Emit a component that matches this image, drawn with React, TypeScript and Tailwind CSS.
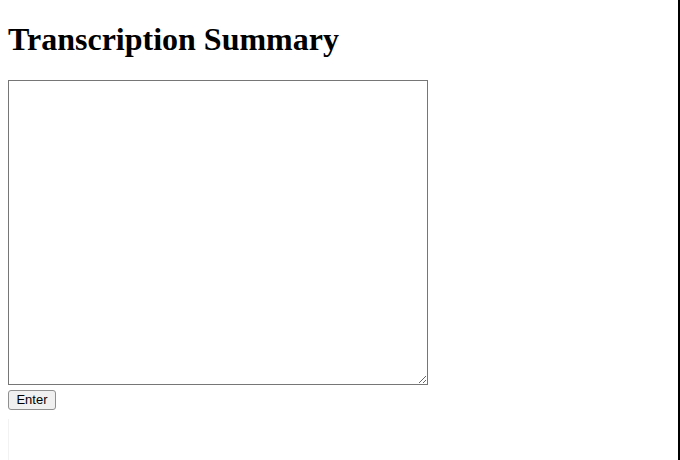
import React, { useState } from "react";

function App() {
  const [text, setText] = useState("");

  return (
    <div className="flex h-[460px] w-[680px] bg-white">
      <div className="flex flex-1 flex-col px-2 pt-[21px]">
        <h1 className="mb-[22px] font-['Liberation_Serif',serif] text-[32px] font-bold leading-[37px] text-black">
          Transcription Summary
        </h1>
        <textarea
          value={text}
          onChange={(e) => setText(e.target.value)}
          className="block h-[305px] w-[420px] border border-[#767676] bg-white p-[2px] font-['Liberation_Mono',monospace] text-[13px]"
        />
        <button className="mt-[5px] h-[20px] w-[48px] rounded-[3px] border border-[#8f8f8f] bg-[#f0f0f0] font-['Liberation_Sans',Arial,sans-serif] text-[13px] leading-[16px] text-black">
          Enter
        </button>
        <div className="mt-[9px] flex-1 border-l border-[#f2f2f2]" />
      </div>
      <div className="w-[2px] bg-black" />
    </div>
  );
}

export default App;
